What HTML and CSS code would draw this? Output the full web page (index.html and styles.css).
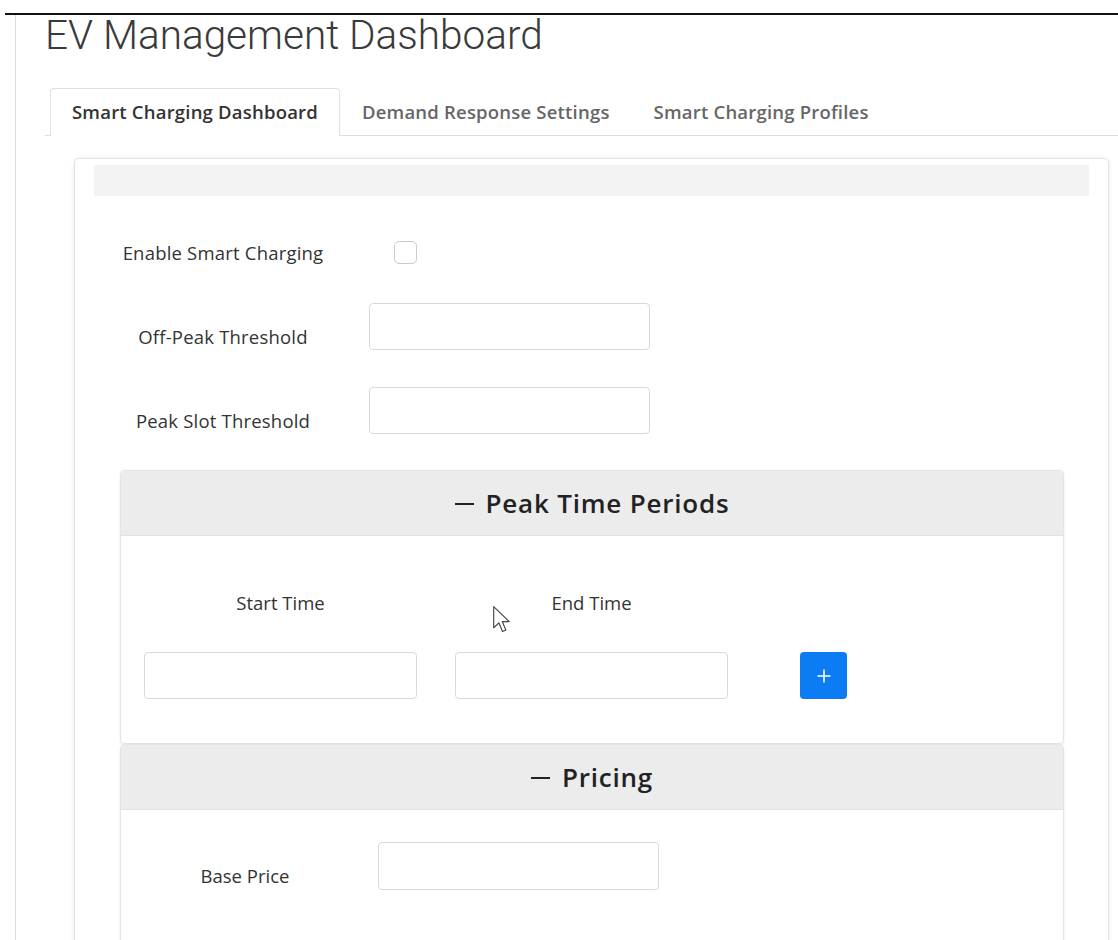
FILE: index.html
```html
<!DOCTYPE html>
<html lang="en">
<head>
<meta charset="utf-8">
<title>EV Management Dashboard</title>
<link rel="stylesheet" href="styles.css">
</head>
<body>
<div class="topline"></div>
<div class="frame">
  <h1 class="page-title">EV Management Dashboard</h1>

  <ul class="tabs">
    <li class="tab active">Smart Charging Dashboard</li>
    <li class="tab">Demand Response Settings</li>
    <li class="tab">Smart Charging Profiles</li>
  </ul>

  <div class="card">
    <div class="card-strip"></div>

    <div class="form-row check-row">
      <label class="row-label">Enable Smart Charging</label>
      <span class="checkbox"></span>
    </div>

    <div class="form-row first-field">
      <label class="row-label low">Off-Peak Threshold</label>
      <input class="field" type="text">
    </div>

    <div class="form-row">
      <label class="row-label low">Peak Slot Threshold</label>
      <input class="field" type="text">
    </div>

    <section class="panel">
      <header class="panel-head"><span class="dash"></span>Peak Time Periods</header>
      <div class="panel-body periods">
        <div class="period-col">
          <span class="col-label">Start Time</span>
          <input class="field period-field" type="text">
        </div>
        <div class="period-col">
          <span class="col-label">End Time</span>
          <input class="field period-field" type="text">
        </div>
        <button class="add-btn" type="button" aria-label="Add period">
          <svg width="16" height="16" viewBox="0 0 16 16"><path d="M8 1.5v13M1.5 8h13" stroke="#fff" stroke-width="1.6" fill="none"/></svg>
        </button>
      </div>
    </section>

    <section class="panel">
      <header class="panel-head"><span class="dash"></span>Pricing</header>
      <div class="panel-body pricing">
        <label class="price-label">Base Price</label>
        <input class="field" type="text">
      </div>
    </section>
  </div>
</div>

<svg class="pointer" width="21" height="29" viewBox="0 0 20 28">
  <path d="M1.5 1.5 L1.5 22 L6.5 17.2 L10 25.5 L13.2 24.1 L9.8 16 L16.5 16 Z" fill="#fff" stroke="#444" stroke-width="1.1" stroke-linejoin="round"/>
</svg>
</body>
</html>
```
FILE: styles.css
```css
* { box-sizing: border-box; }

html, body {
  margin: 0;
  padding: 0;
  background: #fff;
  overflow: hidden;
}

body {
  font-family: "Open Sans", "Noto Sans", sans-serif;
  color: #333;
  height: 940px;
}

.topline {
  height: 2px;
  background: #111;
  margin: 13px 0 0 5px;
}

.frame {
  margin-left: 15px;
  border-left: 1px solid #dcdcdc;
  padding-left: 29px;
  height: 940px;
}

.page-title {
  margin: 0;
  font-family: Roboto, "Liberation Sans", sans-serif;
  font-weight: 300;
  font-size: 40.5px;
  line-height: 40px;
  color: #3a3a3a;
}

.tabs {
  list-style: none;
  margin: 33px 0 0 0;
  padding: 0 0 0 5px;
  display: flex;
  border-bottom: 1px solid #dedede;
  height: 48px;
}

.tab {
  padding: 0 21px;
  font-size: 18.5px;
  font-weight: 600;
  letter-spacing: 0.2px;
  color: #666;
  line-height: 46px;
  border: 1px solid transparent;
  border-bottom: none;
  white-space: nowrap;
}

.tab.active {
  color: #333;
  background: #fff;
  border-color: #e0e0e0;
  border-radius: 4px 4px 0 0;
  height: 48px;
}

.card {
  margin: 22px 9px 0 29px;
  border: 1px solid #e2e2e2;
  border-radius: 5px;
  box-shadow: 0 0 4px rgba(0, 0, 0, 0.08);
  padding: 6px 19px 0 19px;
  height: 800px;
}

.card-strip {
  height: 31px;
  background: #f3f3f3;
}

.form-row {
  display: flex;
  align-items: center;
  margin-left: 26px;
  height: 47px;
  margin-top: 37px;
}

.check-row {
  margin-top: 33px;
  height: 46px;
}

.form-row.first-field {
  margin-top: 28px;
}

.row-label {
  width: 206px;
  text-align: center;
  font-size: 18.5px;
  letter-spacing: 0.2px;
  color: #333;
  white-space: nowrap;
}

.row-label.low {
  margin-top: 19px;
}

.checkbox {
  width: 23px;
  height: 23px;
  margin-left: 68px;
  border: 1.5px solid #cbcbcb;
  border-radius: 5px;
  background: #fff;
}

.field {
  width: 281px;
  height: 47px;
  border: 1px solid #d9d9d9;
  border-radius: 4px;
  background: #fff;
  margin-left: 43px;
  font: inherit;
  outline: none;
}

.panel {
  margin: 36px 25px 0 26px;
  border: 1px solid #e4e4e4;
  border-radius: 4px;
  box-shadow: 0 1px 3px rgba(0, 0, 0, 0.07);
}

.panel + .panel {
  margin-top: 0;
}

.panel-head {
  height: 65px;
  background: #ececec;
  border-bottom: 1px solid #e2e2e2;
  border-radius: 4px 4px 0 0;
  display: flex;
  align-items: center;
  justify-content: center;
  font-size: 26px;
  font-weight: 600;
  letter-spacing: 0.8px;
  color: #222;
}

.dash {
  width: 19px;
  height: 2.5px;
  background: #222;
  margin: 2px 12px 0 0;
}

.periods {
  height: 207px;
  display: flex;
  align-items: flex-end;
  padding: 0 0 44px 23px;
}

.period-col {
  display: flex;
  flex-direction: column;
  align-items: center;
  margin-right: 38px;
}

.col-label {
  font-size: 18.5px;
  color: #333;
  margin-bottom: 37px;
}

.period-field {
  width: 273px;
  height: 47px;
  margin-left: 0;
}

.add-btn {
  width: 47px;
  height: 47px;
  margin-left: 34px;
  border: none;
  border-radius: 4px;
  background: #0b7cf3;
  display: flex;
  align-items: center;
  justify-content: center;
  padding: 0;
}

.pricing {
  display: flex;
  align-items: flex-start;
  padding: 32px 0 0 24px;
  height: 200px;
}

.price-label {
  width: 200px;
  text-align: center;
  font-size: 18.5px;
  color: #333;
  margin-top: 21px;
}

.pricing .field {
  margin-left: 33px;
  height: 48px;
}

.pointer {
  position: absolute;
  left: 492px;
  top: 605px;
}
```
